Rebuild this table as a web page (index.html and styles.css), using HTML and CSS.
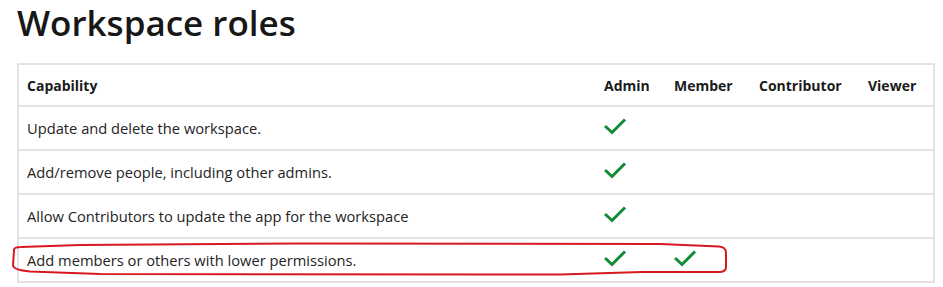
FILE: index.html
```html
<!DOCTYPE html>
<html lang="en">
<head>
  <meta charset="UTF-8" />
  <title>Workspace roles</title>
  <link rel="stylesheet" href="styles.css">
</head>
<body>
  <div class="page">
    <h1>Workspace roles</h1>

    <table class="roles">
      <colgroup>
        <col class="col-cap">
        <col class="col-admin">
        <col class="col-member">
        <col class="col-contrib">
        <col class="col-viewer">
      </colgroup>
      <thead>
        <tr>
          <th>Capability</th>
          <th>Admin</th>
          <th>Member</th>
          <th>Contributor</th>
          <th>Viewer</th>
        </tr>
      </thead>
      <tbody>
        <tr>
          <td>Update and delete the workspace.</td>
          <td><svg class="check" viewBox="0 0 24 18"><polyline points="1,9 8,15.5 21,2.5"/></svg></td>
          <td></td><td></td><td></td>
        </tr>
        <tr>
          <td>Add/remove people, including other admins.</td>
          <td><svg class="check" viewBox="0 0 24 18"><polyline points="1,9 8,15.5 21,2.5"/></svg></td>
          <td></td><td></td><td></td>
        </tr>
        <tr>
          <td>Allow Contributors to update the app for the workspace</td>
          <td><svg class="check" viewBox="0 0 24 18"><polyline points="1,9 8,15.5 21,2.5"/></svg></td>
          <td></td><td></td><td></td>
        </tr>
        <tr>
          <td>Add members or others with lower permissions.</td>
          <td><svg class="check" viewBox="0 0 24 18"><polyline points="1,9 8,15.5 21,2.5"/></svg></td>
          <td><svg class="check" viewBox="0 0 24 18"><polyline points="1,9 8,15.5 21,2.5"/></svg></td>
          <td></td><td></td>
        </tr>
      </tbody>
    </table>

    <!-- hand drawn marker around the last row -->
    <svg class="marker" viewBox="0 0 943 287">
      <path d="M14 251 Q13 247 21 247 L80 245 L300 243.5 L660 244 L719 246.5 Q726 247 726 253 L726 267 Q726 272 719 272 L642 272 L560 274.5 L100 274 L30 271.5 Q13 270 13 265 Z"/>
    </svg>
  </div>
</body>
</html>
```

FILE: styles.css
```css
body {
  margin: 0;
  background: #fff;
  color: #242424;
  font-family: 'Open Sans', 'Noto Sans', sans-serif;
}

.page {
  position: relative;
  width: 943px;
  height: 287px;
  overflow: hidden;
}

h1 {
  margin: 0;
  padding: 0 0 0 17px;
  height: 63px;
  box-sizing: border-box;
  font-size: 35px;
  font-weight: 600;
  line-height: 46px;
  color: #171717;
}

.roles {
  margin-left: 17px;
  width: 916px;
  table-layout: fixed;
  border-collapse: collapse;
  font-size: 14.7px;
}

.col-cap { width: 574px; }
.col-admin { width: 70px; }
.col-member { width: 85px; }
.col-contrib { width: 109px; }
.col-viewer { width: 78px; }

.roles th,
.roles td {
  text-align: left;
  padding: 0 12px;
  border-top: 2px solid #e2e2e2;
  border-bottom: 2px solid #e2e2e2;
  white-space: nowrap;
}

.roles tr > :first-child {
  padding-left: 8px;
  border-left: 2px solid #e2e2e2;
}

.roles tr > :last-child {
  border-right: 2px solid #e2e2e2;
}

.roles th {
  height: 40px;
  font-size: 14px;
  font-weight: 700;
  color: #1b1b1b;
}

.roles td {
  height: 42px;
}

.check {
  display: block;
  width: 24px;
  height: 18px;
  margin-top: -5px;
}

.check polyline {
  fill: none;
  stroke: #138a36;
  stroke-width: 3;
}

.marker {
  position: absolute;
  left: 0;
  top: 0;
  width: 943px;
  height: 287px;
  pointer-events: none;
}

.marker path {
  fill: none;
  stroke: #d7191f;
  stroke-width: 2;
}
```
